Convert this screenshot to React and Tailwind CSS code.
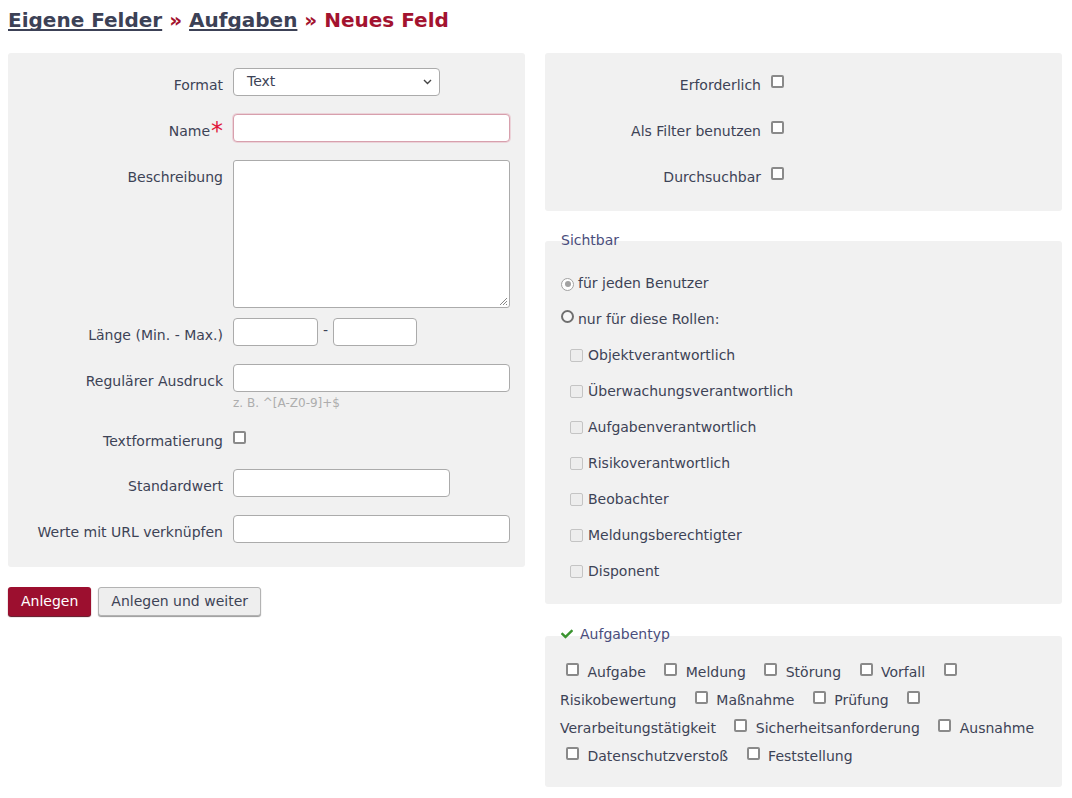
import React from "react";
import { FaCheck } from "react-icons/fa";

const inputCls = "h-[28px] border border-[#ababab] rounded-[4px] bg-white";

function Row({ label, children, className = "" }) {
  return (
    <div className={`flex items-start ${className}`}>
      <label className="w-[215px] shrink-0 text-right pt-[9px] leading-[16px]">{label}</label>
      <div className="ml-[10px]">{children}</div>
    </div>
  );
}

function Check({ className = "" }) {
  return (
    <span
      className={`inline-block w-[13px] h-[13px] border-2 border-[#8a8a8a] rounded-[2px] bg-white ${className}`}
    />
  );
}

function CheckRow({ label, className = "" }) {
  return (
    <div className={`flex items-start h-[28px] ${className}`}>
      <span className="w-[216px] shrink-0 text-right pt-[9px] leading-[16px]">{label}</span>
      <Check className="ml-[10px] mt-[7px]" />
    </div>
  );
}

function Legend({ children, className = "" }) {
  return (
    <div className={`relative z-10 h-[16px] leading-[16px] pl-[16px] text-[#4a4d7c] flex items-center ${className}`}>
      {children}
    </div>
  );
}

const roles = [
  "Objektverantwortlich",
  "Überwachungsverantwortlich",
  "Aufgabenverantwortlich",
  "Risikoverantwortlich",
  "Beobachter",
  "Meldungsberechtigter",
  "Disponent",
];

const types = [
  "Aufgabe",
  "Meldung",
  "Störung",
  "Vorfall",
  "Risikobewertung",
  "Maßnahme",
  "Prüfung",
  "Verarbeitungstätigkeit",
  "Sicherheitsanforderung",
  "Ausnahme",
  "Datenschutzverstoß",
  "Feststellung",
];

export default function App() {
  return (
    <div className="min-h-screen bg-white p-2 font-['DejaVu_Sans',sans-serif] text-[14px] text-[#3d4356]">
      <h1 className="text-[20px] font-bold leading-[24px] text-[#a3132f]">
        <a className="text-[#3c4156] underline decoration-2 underline-offset-[2px] [text-decoration-skip-ink:none]">Eigene Felder</a>
        {" » "}
        <a className="text-[#3c4156] underline decoration-2 underline-offset-[2px] [text-decoration-skip-ink:none]">Aufgaben</a>
        {" » Neues Feld"}
      </h1>

      <div className="mt-[21px] grid grid-cols-[517px_517px] gap-x-[20px] items-start">
        {/* linke Spalte */}
        <div>
          <div className="bg-[#f1f1f1] rounded-[3px] pt-[15px] pb-[24px]">
            <Row label="Format">
              <div className={`${inputCls} w-[207px] flex items-center justify-between pl-[13px] pr-[7px]`}>
                <span className="leading-[26px] -mt-[3px]">Text</span>
                <svg width="9" height="6" viewBox="0 0 9 6">
                  <polyline points="1,1 4.5,4.5 8,1" fill="none" stroke="#444" strokeWidth="1.4" />
                </svg>
              </div>
            </Row>
            <Row
              className="mt-[18px]"
              label={
                <>
                  Name
                  <span className="text-[#e0173a] text-[24px] leading-[0px] ml-[1px] align-[-3px]">*</span>
                </>
              }
            >
              <div className="h-[28px] w-[277px] border border-[#d7a0ad] rounded-[4px] bg-white shadow-[0_0_0_1px_#ecd3d9]" />
            </Row>
            <Row className="mt-[18px]" label="Beschreibung">
              <div className="relative h-[148px] w-[277px] border border-[#ababab] rounded-[3px] bg-white">
                <svg className="absolute right-[1px] bottom-[1px]" width="10" height="10" viewBox="0 0 10 10">
                  <line x1="9" y1="2" x2="2" y2="9" stroke="#888" strokeWidth="1" />
                  <line x1="9" y1="5" x2="5" y2="9" stroke="#888" strokeWidth="1" />
                  <line x1="9" y1="8" x2="8" y2="9" stroke="#888" strokeWidth="1" />
                </svg>
              </div>
            </Row>
            <Row className="mt-[10px]" label="Länge (Min. - Max.)">
              <div className="flex items-start">
                <div className={`${inputCls} w-[85px]`} />
                <span className="mx-[5px] pt-[4px] leading-[16px]">-</span>
                <div className={`${inputCls} w-[84px]`} />
              </div>
            </Row>
            <Row className="mt-[18px]" label="Regulärer Ausdruck">
              <div className={`${inputCls} w-[277px]`} />
              <div className="mt-[4px] text-[12px] leading-[14px] text-[#adadad]">z. B. ^[A-Z0-9]+$</div>
            </Row>
            <Row className="mt-[14px]" label="Textformatierung">
              <Check className="mt-[7px]" />
            </Row>
            <Row className="mt-[19px]" label="Standardwert">
              <div className={`${inputCls} w-[217px]`} />
            </Row>
            <Row className="mt-[18px]" label="Werte mit URL verknüpfen">
              <div className={`${inputCls} w-[277px]`} />
            </Row>
          </div>

          <div className="mt-[20px] flex gap-[7px]">
            <button className="h-[29px] px-[13px] rounded-[3px] bg-[#9c0f2f] text-white flex items-center shadow-[0_1px_1px_#5a0a1c]">
              Anlegen
            </button>
            <button className="h-[29px] px-[12px] rounded-[3px] bg-[#eeeeee] border border-[#b3b3b3] text-[#3d4356] flex items-center shadow-[0_1px_1px_#9a9a9a]">
              Anlegen und weiter
            </button>
          </div>
        </div>

        {/* rechte Spalte */}
        <div>
          <div className="bg-[#f1f1f1] rounded-[3px] pt-[15px] pb-[23px]">
            <CheckRow label="Erforderlich" />
            <CheckRow className="mt-[18px]" label="Als Filter benutzen" />
            <CheckRow className="mt-[18px]" label="Durchsuchbar" />
          </div>

          <Legend className="mt-[21px]">Sichtbar</Legend>
          <div className="-mt-[7px] bg-[#f1f1f1] rounded-[3px] pt-[24px] pb-[15px] leading-[36px]">
            <div className="pl-[16px]">
              <span className="inline-flex items-center justify-center w-[13px] h-[13px] rounded-full border-[1.5px] border-[#a2a2a2] bg-white mr-[4px] align-[1px]">
                <span className="w-[6px] h-[6px] rounded-full bg-[#a2a2a2]" />
              </span>
              für jeden Benutzer
            </div>
            <div className="pl-[16px]">
              <span className="inline-block w-[13px] h-[13px] rounded-full border-2 border-[#6f6f6f] bg-[#f7f7f7] mr-[4px] align-[1px]" />
              nur für diese Rollen:
            </div>
            {roles.map((r) => (
              <div key={r} className="pl-[25px]">
                <span className="inline-block w-[13px] h-[13px] rounded-[2px] border-[1.5px] border-[#c4c4c4] bg-[#ededed] mr-[5px] align-[-2px]" />
                {r}
              </div>
            ))}
          </div>

          <Legend className="mt-[22px]">
            <FaCheck className="text-[#3a932f] mr-[7px]" size={12} />
            Aufgabentyp
          </Legend>
          <div className="-mt-[6px] bg-[#f1f1f1] rounded-[3px] pt-[22px] pb-[17px] pl-[15px] pr-[5px] leading-[28px]">
            {types.map((t) => (
              <React.Fragment key={t}>
                <span className="mr-[8px]">
                  <Check className="ml-[6px] mr-[4px] align-[1px]" /> {t}
                </span>{" "}
              </React.Fragment>
            ))}
          </div>
        </div>
      </div>
    </div>
  );
}
